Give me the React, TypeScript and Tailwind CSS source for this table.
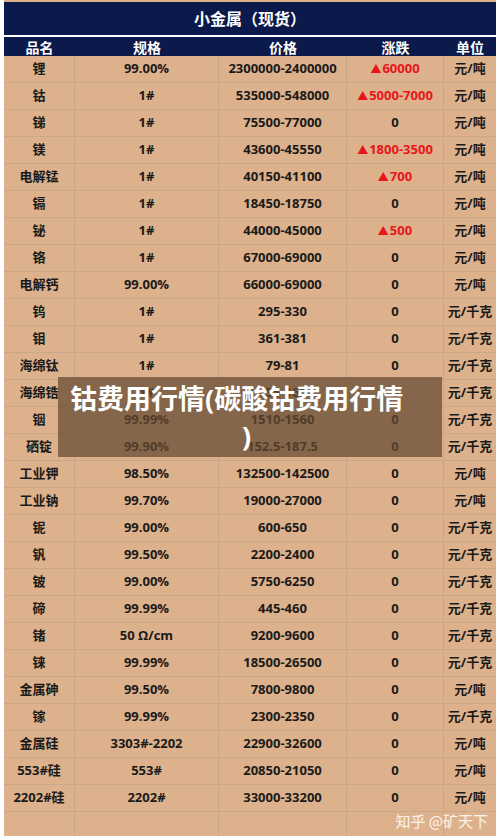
const rows: [string, string, string, string, string][] = [
  ['锂', '99.00%', '2300000-2400000', '▲60000', '元/吨'],
  ['钴', '1#', '535000-548000', '▲5000-7000', '元/吨'],
  ['锑', '1#', '75500-77000', '0', '元/吨'],
  ['镁', '1#', '43600-45550', '▲1800-3500', '元/吨'],
  ['电解锰', '1#', '40150-41100', '▲700', '元/吨'],
  ['镉', '1#', '18450-18750', '0', '元/吨'],
  ['铋', '1#', '44000-45000', '▲500', '元/吨'],
  ['铬', '1#', '67000-69000', '0', '元/吨'],
  ['电解钙', '99.00%', '66000-69000', '0', '元/吨'],
  ['钨', '1#', '295-330', '0', '元/千克'],
  ['钼', '1#', '361-381', '0', '元/千克'],
  ['海绵钛', '1#', '79-81', '0', '元/千克'],
  ['海绵锆', '1#', '155-165', '0', '元/千克'],
  ['铟', '99.99%', '1510-1560', '0', '元/千克'],
  ['硒锭', '99.90%', '152.5-187.5', '0', '元/千克'],
  ['工业钾', '98.50%', '132500-142500', '0', '元/吨'],
  ['工业钠', '99.70%', '19000-27000', '0', '元/吨'],
  ['铌', '99.00%', '600-650', '0', '元/千克'],
  ['钒', '99.50%', '2200-2400', '0', '元/千克'],
  ['铍', '99.00%', '5750-6250', '0', '元/千克'],
  ['碲', '99.99%', '445-460', '0', '元/千克'],
  ['锗', '50 Ω/cm', '9200-9600', '0', '元/千克'],
  ['铼', '99.99%', '18500-26500', '0', '元/千克'],
  ['金属砷', '99.50%', '7800-9800', '0', '元/吨'],
  ['镓', '99.99%', '2300-2350', '0', '元/千克'],
  ['金属硅', '3303#-2202', '22900-32600', '0', '元/吨'],
  ['553#硅', '553#', '20850-21050', '0', '元/吨'],
  ['2202#硅', '2202#', '33000-33200', '0', '元/吨'],
  ['', '', '', '', ''],
];

const cols = 'grid grid-cols-[71px_144px_128px_97px_52px]';
const cell = 'flex items-center justify-center border-r border-[#c9a88a] last:border-r-0';

const Change = ({ v }: { v: string }) => {
  if (!v.startsWith('▲')) return <>{v}</>;
  return (
    <span className="text-[#e8161b] flex items-center">
      <span className="text-[11px] mr-[1px]">▲</span>
      {v.slice(1)}
    </span>
  );
};

const App = () => {
  return (
    <div
      className="w-[500px] h-[836px] overflow-hidden bg-white px-[4px] relative"
      style={{ fontFamily: '"Open Sans", "Noto Sans CJK SC", sans-serif' }}
    >
      <div className="h-[2px] bg-[#dcb18b]" />
      <div className="h-[33px] bg-[#0b1a4a] flex items-center justify-center text-white font-bold text-[16px]">
        小金属（现货）
      </div>
      <div className="h-[2px] bg-white" />
      <div className={`${cols} h-[19px] bg-[#0b1a4a] text-white font-bold text-[14px]`}>
        {['品名', '规格', '价格', '涨跌', '单位'].map((h) => (
          <div key={h} className="flex items-center justify-center">
            {h}
          </div>
        ))}
      </div>
      <div className="bg-[#dcb18b] text-[#1a1a1a] font-bold text-[13px]">
        {rows.map((r, i) => (
          <div key={i} className={`${cols} h-[27px] border-b border-[#c9a88a]`}>
            <div className={cell}>{r[0]}</div>
            <div className={cell}>{r[1]}</div>
            <div className={cell}>{r[2]}</div>
            <div className={cell}>
              <Change v={r[3]} />
            </div>
            <div className={cell}>{r[4]}</div>
          </div>
        ))}
      </div>

      <div className="absolute left-[58px] top-[377px] w-[384px] h-[80px] bg-[rgba(100,74,48,0.72)] px-[12px] pt-[3px] text-white font-bold text-[27px] leading-[37px]">
        <span className="block whitespace-nowrap">钴费用行情(碳酸钴费用行情</span>
        <span className="block pl-[172px]">)</span>
      </div>

      <div
        className="absolute right-[12px] bottom-[4px] text-white/85 text-[15px]"
        style={{ fontFamily: '"Noto Sans CJK SC", sans-serif' }}
      >
        知乎 @矿天下
      </div>
    </div>
  );
};

export default App;
